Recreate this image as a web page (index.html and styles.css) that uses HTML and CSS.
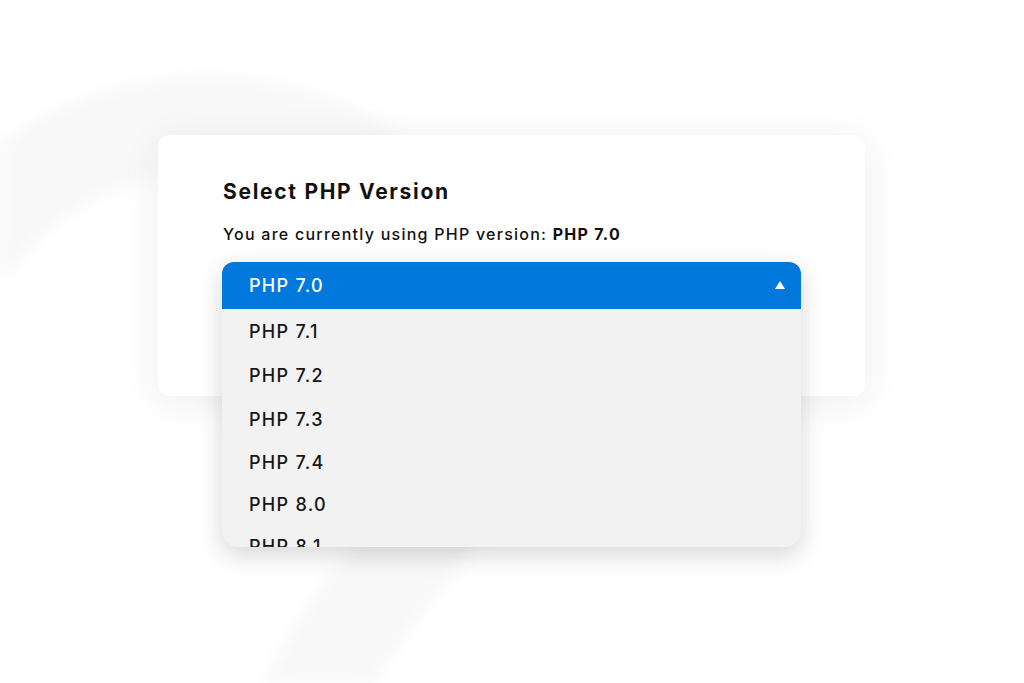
FILE: index.html
```html
<!DOCTYPE html>
<html>
<head>
<meta charset="utf-8">
<title>Select PHP Version</title>
<link rel="stylesheet" href="styles.css">
</head>
<body>
<div class="stage">
  <svg class="swirl" width="1024" height="683" viewBox="0 0 1024 683">
    <path d="M -40 260 C 40 130, 200 95, 330 150 C 500 230, 520 420, 420 540 C 370 600, 330 650, 300 720" fill="none" stroke="#f8f8f8" stroke-width="95" stroke-linecap="round"/>
  </svg>

  <div class="card">
    <h2 class="title">Select PHP Version</h2>
    <p class="current">You are currently using PHP version: <b>PHP 7.0</b></p>

    <div class="dropdown">
      <div class="selected">
        <span>PHP 7.0</span>
        <svg class="caret" width="10" height="8" viewBox="0 0 10 8"><path d="M5 0 L10 8 L0 8 Z" fill="#fff"/></svg>
      </div>
      <ul class="options">
        <li>PHP 7.1</li>
        <li>PHP 7.2</li>
        <li>PHP 7.3</li>
        <li>PHP 7.4</li>
        <li>PHP 8.0</li>
        <li>PHP 8.1</li>
      </ul>
    </div>
  </div>
</div>
</body>
</html>
```

FILE: styles.css
```css
body {
margin: 0;
padding: 0;
background: #fff;
font-family: "Inter", "Open Sans", sans-serif;
color: #111;
}
.stage {
position: relative;
width: 1024px;
height: 683px;
overflow: hidden;
padding-top: 135px;
box-sizing: border-box;
}
.swirl {
position: absolute;
left: 0;
top: 0;
filter: blur(8px);
}
.card {
position: relative;
margin-left: 158px;
width: 707px;
height: 261px;
box-sizing: border-box;
padding: 44px 0 0 65px;
background: #fff;
border-radius: 12px;
box-shadow: 0 6px 40px rgba(0, 0, 0, 0.07);
}
.title {
margin: 0;
font-size: 21px;
font-weight: 700;
line-height: 26px;
letter-spacing: 1.7px;
}
.current {
margin: 18px 0 0;
font-size: 16px;
font-weight: 500;
line-height: 22px;
letter-spacing: 1.25px;
}
.current b {
font-weight: 700;
}
.dropdown {
margin-top: 17px;
width: 579px;
margin-left: -1px;
border-radius: 12px 12px 16px 16px;
box-shadow: 0 8px 24px rgba(0, 0, 0, 0.16);
background: #f2f2f2;
overflow: hidden;
}
.selected {
display: flex;
align-items: center;
justify-content: space-between;
height: 47px;
padding: 0 16px 0 27px;
background: #0178dc;
color: #fff;
font-size: 18px;
font-weight: 500;
letter-spacing: 1.3px;
}
.caret {
margin-top: -2px;
}
.options {
list-style: none;
margin: 0;
padding: 0;
height: 238px;
overflow: hidden;
}
.options li {
display: flex;
align-items: center;
height: 44px;
padding-left: 27px;
font-size: 18px;
font-weight: 500;
letter-spacing: 1.3px;
color: #161616;
}
.options li:nth-child(n+4) {
height: 42px;
}
```
